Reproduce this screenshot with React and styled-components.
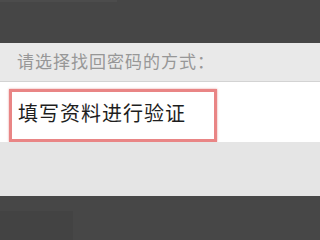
import React from 'react';
import styled, { createGlobalStyle } from 'styled-components';

const GlobalStyle = createGlobalStyle`
  html, body {
    margin: 0;
    padding: 0;
    background: #464646;
  }
  body {
    font-family: "Noto Sans CJK SC", "Noto Sans", sans-serif;
  }
`;

const Screen = styled.div`
  width: 320px;
  height: 240px;
  display: flex;
  flex-direction: column;
  overflow: hidden;
`;

const TopBar = styled.div`
  height: 43px;
  background: #464646;
  display: flex;
  flex-direction: column;
`;

const TopGlow = styled.div`
  width: 117px;
  height: 2px;
  background: #4c4c4c;
`;

const PromptBar = styled.div`
  height: 39px;
  box-sizing: border-box;
  background: #e9e9e9;
  border-bottom: 1px solid #d3d3d3;
  display: flex;
  align-items: center;
  padding: 0 0 3px 17px;
  color: #979797;
  font-size: 17px;
  letter-spacing: 1px;
`;

const OptionRow = styled.div`
  height: 60px;
  background: #ffffff;
  padding: 7px 0 0 9px;
  box-sizing: border-box;
  display: flex;
  align-items: flex-start;
`;

const OptionBox = styled.div`
  width: 208px;
  height: 53px;
  box-sizing: border-box;
  border: 3px solid #e98585;
  box-shadow: 0 0 2px rgba(210, 90, 90, 0.6);
  display: flex;
  align-items: center;
  padding: 0 0 7px 6px;
  color: #1e1e1e;
  font-size: 20px;
  letter-spacing: 1px;
`;

const Filler = styled.div`
  height: 54px;
  background: #e5e5e5;
`;

const BottomBar = styled.div`
  flex: 1;
  background: #474747;
  display: flex;
  align-items: flex-end;
`;

const BottomTab = styled.div`
  width: 73px;
  height: 29px;
  background: #434343;
`;

export default function App() {
  return (
    <Screen>
      <GlobalStyle />
      <TopBar>
        <TopGlow />
      </TopBar>
      <PromptBar>请选择找回密码的方式：</PromptBar>
      <OptionRow>
        <OptionBox>填写资料进行验证</OptionBox>
      </OptionRow>
      <Filler />
      <BottomBar>
        <BottomTab />
      </BottomBar>
    </Screen>
  );
}
